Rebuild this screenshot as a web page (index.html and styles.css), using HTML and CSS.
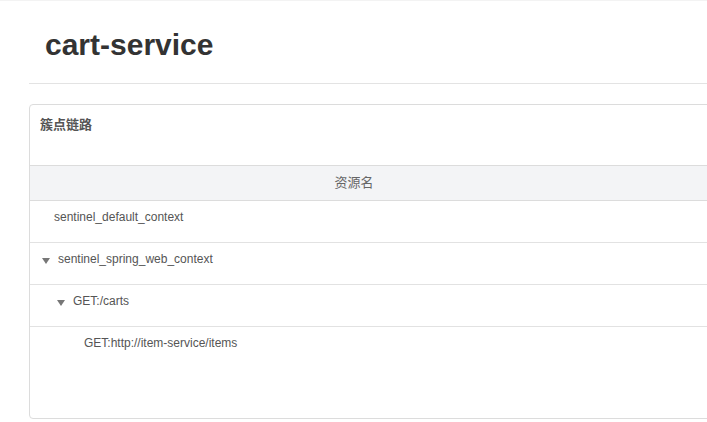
FILE: index.html
```html
<!DOCTYPE html>
<html lang="zh">
<head>
<meta charset="utf-8">
<title>cart-service</title>
<link rel="stylesheet" href="styles.css">
</head>
<body>
<div class="page">
  <div class="page-header">
    <h1 class="page-title">cart-service</h1>
  </div>
  <div class="divider"></div>
  <div class="panel">
    <div class="panel-title">簇点链路</div>
    <div class="table">
      <div class="thead">
        <div class="th th-name">资源名</div>
        <div class="th th-rest"></div>
      </div>
      <div class="row">
        <div class="cell lvl-0"><span class="leaf"></span><span class="name">sentinel_default_context</span></div>
      </div>
      <div class="row">
        <div class="cell lvl-0"><span class="caret"></span><span class="name">sentinel_spring_web_context</span></div>
      </div>
      <div class="row">
        <div class="cell lvl-1"><span class="caret"></span><span class="name">GET:/carts</span></div>
      </div>
      <div class="row row-last">
        <div class="cell lvl-2"><span class="leaf"></span><span class="name">GET:http://item-service/items</span></div>
      </div>
    </div>
  </div>
</div>
</body>
</html>
```

FILE: styles.css
```css
* { box-sizing: border-box; }
html, body {
  margin: 0;
  padding: 0;
  background: #fff;
  overflow: hidden;
  height: 422px;
}
body {
  font-family: "Liberation Sans", Arial, "Noto Sans CJK SC", sans-serif;
  font-size: 12px;
  color: #555;
  border-top: 1px solid #f3f3f3;
}
.page {
  padding-left: 29px;
  width: 1100px;
}
.page-header {
  padding: 27px 0 0 16px;
}
.page-title {
  margin: 0;
  font-size: 30px;
  line-height: 34px;
  font-weight: bold;
  color: #333;
}
.divider {
  margin-top: 21px;
  height: 1px;
  background: #e3e3e3;
}
.panel {
  margin-top: 20px;
  border: 1px solid #dcdcdc;
  border-radius: 4px;
  padding-bottom: 50px;
  width: 1000px;
}
.panel-title {
  font-family: "Liberation Sans", "Noto Sans CJK SC", sans-serif;
  font-size: 13px;
  font-weight: bold;
  color: #555;
  height: 60px;
  padding: 11px 10px 0;
  line-height: 17px;
}
.thead {
  display: flex;
  background: #f3f4f6;
  border-top: 1px solid #dcdcdc;
  border-bottom: 1px solid #dcdcdc;
  height: 36px;
}
.th {
  font-family: "Liberation Sans", "Noto Sans CJK SC", sans-serif;
  font-size: 13px;
  color: #666;
  line-height: 34px;
  text-align: center;
}
.th-name { width: 648px; }
.th-rest { flex: 1; }
.row {
  height: 42px;
  border-bottom: 1px solid #e2e2e2;
}
.row-last { border-bottom: none; height: 41px; }
.cell {
  display: flex;
  align-items: center;
  padding: 8px 0 0 12px;
  height: 25px;
  line-height: 17px;
}
.lvl-1 { padding-left: 27px; }
.lvl-2 { padding-left: 42px; }
.leaf {
  display: inline-block;
  width: 12px;
  height: 1px;
}
.caret {
  display: inline-block;
  width: 0;
  height: 0;
  border-left: 4px solid transparent;
  border-right: 4px solid transparent;
  border-top: 6px solid #777;
  margin: 3px 8px 0 0;
}
.name {
  color: #555;
}
```
